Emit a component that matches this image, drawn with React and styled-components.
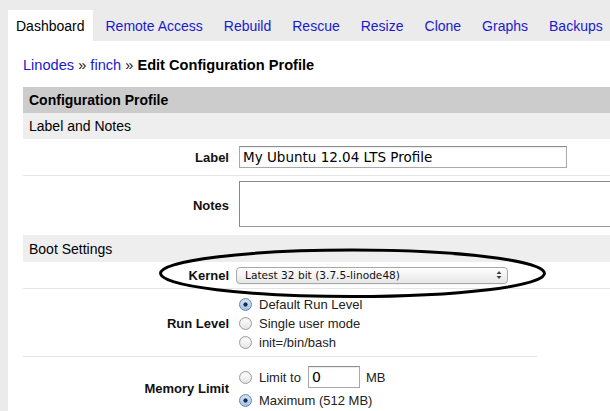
import React from 'react';
import styled, { createGlobalStyle, css } from 'styled-components';

const GlobalStyle = createGlobalStyle`
  html, body {
    margin: 0;
    padding: 0;
    background: #ebebeb;
    overflow: hidden;
  }
  body {
    font-family: "Liberation Sans", Arial, sans-serif;
    color: #000;
  }
`;

const Page = styled.div`
  position: relative;
  width: 610px;
  height: 411px;
  overflow: hidden;
`;

const TabBar = styled.nav`
  display: flex;
  gap: 5px;
  padding: 10px 0 0 8px;
  height: 31px;
`;

const Tab = styled.a`
  display: block;
  padding: 0 8px;
  height: 31px;
  line-height: 32px;
  font-size: 14px;
  white-space: nowrap;
  text-decoration: none;
  color: #1a1acc;
  cursor: pointer;

  ${({ $active }) =>
    $active &&
    css`
      background: #fff;
      color: #000;
    `}
`;

const Panel = styled.main`
  background: #fff;
  margin-left: 8px;
  padding: 15px 0 0 15px;
  height: 400px;
`;

const Breadcrumb = styled.div`
  font-size: 14.6px;
  line-height: 18px;
  margin-bottom: 13px;
  white-space: nowrap;

  a {
    color: #1a1acc;
    text-decoration: none;
  }

  strong {
    font-weight: bold;
  }
`;

const Sep = styled.span`
  color: #111;
`;

const Table = styled.section`
  width: 700px;
`;

const Header = styled.div`
  background: #cccccc;
  height: 26px;
  line-height: 27px;
  padding-left: 6px;
  font-size: 14px;
  font-weight: bold;
`;

const SubHeader = styled.div`
  background: #eeeeee;
  height: ${({ $h }) => $h}px;
  line-height: ${({ $h }) => $h + 1}px;
  padding-left: 6px;
  font-size: 14px;
`;

const Row = styled.div`
  display: grid;
  grid-template-columns: 216px 1fr;
  align-items: center;
  box-sizing: border-box;
  height: ${({ $h }) => $h}px;
  padding: ${({ $pad }) => $pad || '0'};

  ${({ $rule }) =>
    $rule === 'full' &&
    css`
      border-bottom: 1px solid #e6e6e6;
    `}

  ${({ $rule }) =>
    $rule === 'short' &&
    css`
      background: linear-gradient(#e3e3e3, #e3e3e3) no-repeat left bottom / 514px 1px;
    `}
`;

const FieldLabel = styled.label`
  text-align: right;
  padding-right: 10px;
  font-size: 13px;
  font-weight: bold;
  color: #111;
`;

const TextInput = styled.input`
  box-sizing: border-box;
  width: ${({ $w }) => $w}px;
  height: 22px;
  margin: 0;
  padding: 0 3px;
  border: 1px solid #a9a9a9;
  border-top-color: #8f8f8f;
  box-shadow: inset 0 1px 1px rgba(0, 0, 0, 0.08);
  font-family: "DejaVu Sans", sans-serif;
  font-size: ${({ $fs }) => $fs || 13.5}px;
  color: #000;
  outline: none;
`;

const NotesArea = styled.textarea`
  box-sizing: border-box;
  width: 420px;
  height: 46px;
  margin: 0;
  padding: 2px 3px;
  border: 1px solid #8a8a8a;
  border-bottom-color: #9a9a9a;
  resize: none;
  outline: none;
  font-family: "DejaVu Sans", sans-serif;
  font-size: 13px;
`;

const SelectBox = styled.div`
  box-sizing: border-box;
  width: 272px;
  height: 17px;
  margin-left: -3px;
  padding: 0 5px 0 8px;
  display: flex;
  align-items: center;
  justify-content: space-between;
  border: 1px solid #a8a8a8;
  border-radius: 4px;
  background: linear-gradient(#ffffff, #f3f3f3 50%, #e6e6e6);
  box-shadow: 0 1px 0 rgba(0, 0, 0, 0.05);
  font-family: "DejaVu Sans", sans-serif;
  font-size: 10.6px;
  color: #111;
  white-space: nowrap;
`;

const RadioGroup = styled.div`
  display: flex;
  flex-direction: column;
  gap: ${({ $gap }) => $gap || 0}px;
`;

const Option = styled.div`
  display: flex;
  align-items: center;
  gap: 7px;
  height: ${({ $h }) => $h || 19}px;
  font-size: 13px;
  color: #222;
  white-space: nowrap;
`;

const Radio = styled.span`
  box-sizing: border-box;
  width: 13px;
  height: 13px;
  flex: none;
  border-radius: 50%;
  border: 1px solid #9d9d9d;
  background: linear-gradient(#ffffff, #e4e4e4);
  box-shadow: inset 0 1px 1px rgba(0, 0, 0, 0.08);

  ${({ $checked }) =>
    $checked &&
    css`
      border-color: #6c87ad;
      background: radial-gradient(circle, #1d2b48 0 1.8px, transparent 2.4px),
        linear-gradient(#d9e9f8, #9cc3ea);
    `}
`;

const Unit = styled.span`
  margin-left: -1px;
`;

const Annotation = styled.svg`
  position: absolute;
  left: 0;
  top: 0;
  pointer-events: none;
`;

const tabs = ['Dashboard', 'Remote Access', 'Rebuild', 'Rescue', 'Resize', 'Clone', 'Graphs', 'Backups'];

export default function App() {
  return (
    <Page>
      <GlobalStyle />
      <TabBar>
        {tabs.map((t, i) => (
          <Tab key={t} $active={i === 0}>
            {t}
          </Tab>
        ))}
      </TabBar>

      <Panel>
        <Breadcrumb>
          <a>Linodes</a>
          <Sep> » </Sep>
          <a>finch</a>
          <Sep> » </Sep>
          <strong>Edit Configuration Profile</strong>
        </Breadcrumb>

        <Table>
          <Header>Configuration Profile</Header>
          <SubHeader $h={26}>Label and Notes</SubHeader>

          <Row $h={37} $rule="full">
            <FieldLabel>Label</FieldLabel>
            <div>
              <TextInput $w={328} readOnly value="My Ubuntu 12.04 LTS Profile" />
            </div>
          </Row>

          <Row $h={59}>
            <FieldLabel>Notes</FieldLabel>
            <div>
              <NotesArea readOnly value="" />
            </div>
          </Row>

          <SubHeader $h={27}>Boot Settings</SubHeader>

          <Row $h={27} $rule="full">
            <FieldLabel>Kernel</FieldLabel>
            <div>
              <SelectBox>
                <span>Latest 32 bit (3.7.5-linode48)</span>
                <svg width="6" height="10" viewBox="0 0 6 10">
                  <path d="M0.5 4 L3 1 L5.5 4 Z M0.5 6 L3 9 L5.5 6 Z" fill="#444" />
                </svg>
              </SelectBox>
            </div>
          </Row>

          <Row $h={68} $rule="short">
            <FieldLabel>Run Level</FieldLabel>
            <RadioGroup>
              <Option>
                <Radio $checked />
                Default Run Level
              </Option>
              <Option>
                <Radio />
                Single user mode
              </Option>
              <Option>
                <Radio />
                init=/bin/bash
              </Option>
            </RadioGroup>
          </Row>

          <Row $h={54} $pad="8px 0 0">
            <FieldLabel>Memory Limit</FieldLabel>
            <RadioGroup $gap={3}>
              <Option $h={22}>
                <Radio />
                Limit to
                <TextInput $w={52} $fs={14} readOnly value="0" />
                <Unit>MB</Unit>
              </Option>
              <Option>
                <Radio $checked />
                Maximum (512 MB)
              </Option>
            </RadioGroup>
          </Row>
        </Table>
      </Panel>

      <Annotation width="610" height="411" viewBox="0 0 610 411">
        <ellipse cx="352.5" cy="273.3" rx="192" ry="23.2" fill="none" stroke="#000" strokeWidth="3" />
      </Annotation>
    </Page>
  );
}
